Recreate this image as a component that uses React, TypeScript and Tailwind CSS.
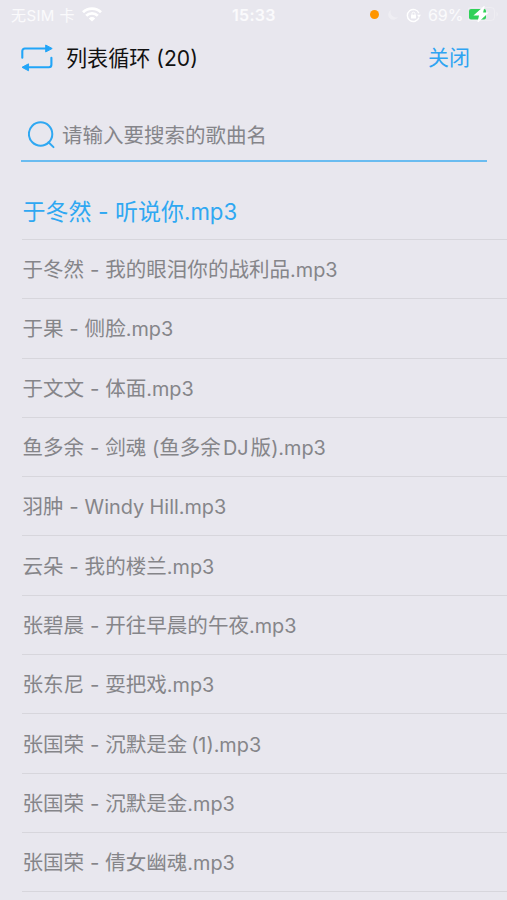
import { clsx } from 'clsx'

const songs = [
  '于冬然 - 听说你.mp3',
  '于冬然 - 我的眼泪你的战利品.mp3',
  '于果 - 侧脸.mp3',
  '于文文 - 体面.mp3',
  '鱼多余 - 剑魂 (鱼多余DJ版).mp3',
  '羽肿 - Windy Hill.mp3',
  '云朵 - 我的楼兰.mp3',
  '张碧晨 - 开往早晨的午夜.mp3',
  '张东尼 - 耍把戏.mp3',
  '张国荣 - 沉默是金 (1).mp3',
  '张国荣 - 沉默是金.mp3',
  '张国荣 - 倩女幽魂.mp3',
]

function StatusBar() {
  return (
    <div className="flex h-[30px] items-center text-[16px] text-white/80">
      <span className="ml-[11px] w-[71px] whitespace-nowrap pt-[3px] text-[15px] tracking-[0.4px]">无SIM 卡</span>
      <svg className="mb-0.5 h-[15px] w-5" viewBox="0 0 20 15" fill="none" stroke="white" strokeWidth="2.8">
        <path d="M1 5.2a13 13 0 0 1 18 0" />
        <path d="M4.2 8.8a8.3 8.3 0 0 1 11.6 0" />
        <path d="M10 14.6 6.8 11.4a4.6 4.6 0 0 1 6.4 0z" fill="white" stroke="none" />
      </svg>
      <span className="ml-[130px] w-[138px] font-semibold tracking-[0.3px]">15:33</span>
      <span className="mb-0.5 h-[9px] w-[9px] rounded-full bg-[#ff9500]" />
      <svg className="ml-2 h-3 w-3" viewBox="0 0 12 12" fill="white" opacity="0.3">
        <path d="M4 1a5.2 5.2 0 1 0 7 7A5.4 5.4 0 0 1 4 1z" />
      </svg>
      <svg className="ml-[7px] h-[15px] w-[15px]" viewBox="0 0 15 15" fill="none" stroke="white" strokeWidth="1.4">
        <path d="M12.9 5.2A6 6 0 1 0 13 9.5" />
        <path d="M11 6.8h4l-2 2.8z" fill="white" stroke="none" />
        <rect x="5" y="6.8" width="5" height="3.8" rx=".5" fill="white" stroke="none" />
        <path d="M6 7V5.7a1.5 1.5 0 0 1 3 0V7" strokeWidth="1" />
      </svg>
      <span className="ml-[7px] w-[40px] whitespace-nowrap text-[16px] tracking-[-0.1px]">69%</span>
      <svg className="mb-0.5 h-4 w-8 shrink-0" viewBox="0 0 32 16">
        <rect x="-.5" y="1.5" width="27" height="13" rx="3.5" fill="none" stroke="white" strokeOpacity=".25" />
        <path d="M28.5 6v4.5c1.7-.6 1.7-4 0-4.5z" fill="white" fillOpacity=".3" />
        <rect x="1" y="3" width="17" height="10.5" rx="2" fill="#30d158" />
        <path d="M15.5 1.5 7.5 8.8h4.6L10.5 15l8.2-7.6h-4.6z" fill="white" stroke="white" strokeWidth="1.6" />
      </svg>
    </div>
  )
}

function LoopIcon() {
  return (
    <svg className="h-7 w-8" viewBox="0 0 32 28" fill="none" stroke="#21a5f8" strokeWidth="2.1" strokeLinecap="round">
      <path d="M1.3 13.7V7a2.5 2.5 0 0 1 2.5-2.5h22" />
      <path d="M25 1.2 31.2 4.5 25 7.8z" fill="#21a5f8" stroke="#21a5f8" strokeWidth="1" strokeLinejoin="round" />
      <path d="M30.4 13.8v7a2.5 2.5 0 0 1-2.5 2.5H7" />
      <path d="M7.2 20 1 23.3l6.2 3.3z" fill="#21a5f8" stroke="#21a5f8" strokeWidth="1" strokeLinejoin="round" />
    </svg>
  )
}

function SearchIcon() {
  return (
    <svg className="mb-[3px] h-7 w-7" viewBox="0 0 28 28" fill="none" stroke="#2fa8f2" strokeWidth="2" strokeLinecap="round">
      <circle cx="12.6" cy="13" r="11.7" />
      <path d="m20.5 21.3 5 4.8" />
    </svg>
  )
}

// Latin runs are set slightly smaller than the Chinese around them
function SongName({ name }: { name: string }) {
  return (
    <span className="whitespace-pre">
      {name.split(/([A-Za-z0-9.()][A-Za-z0-9.() ]*)/).map((part, i) =>
        i % 2 ? (
          <span
            key={i}
            className={clsx('text-[0.965em]', part === 'DJ' && 'mx-[2px]', part.startsWith('(1') && '-ml-[2px]')}
          >
            {part}
          </span>
        ) : (
          part
        ),
      )}
    </span>
  )
}

export default function App() {
  return (
    <div className="h-[900px] w-[507px] overflow-hidden bg-[#e8e7ee] font-[Inter,'Noto_Sans_CJK_SC',sans-serif]">
      <StatusBar />
      <header className="flex h-[56px] items-center pl-[21px] pr-[37px]">
        <LoopIcon />
        <h1 className="ml-[13px] flex-1 whitespace-nowrap pt-0.5 text-[21.1px] text-[#111]">列表循环 (20)</h1>
        <button className="text-[21px] text-[#2fa4f2]">关闭</button>
      </header>
      <div className="ml-[21px] mr-5 mt-[22px] flex h-[54px] items-center border-b-2 border-[#6abcf0] pl-[7px] pt-1">
        <SearchIcon />
        <span className="ml-[6px] text-[20.5px] text-[#85858a]">请输入要搜索的歌曲名</span>
      </div>
      <ul className="mt-[18.6px] pl-[22px]">
        {songs.map((song, i) => (
          <li
            key={song}
            className={clsx(
              'flex h-[59.32px] items-center border-b border-[#d7d6dc] pl-[0.5px]',
              i === 0 ? 'pt-[4px] text-[23px] text-[#2fa8f2]' : 'pt-[3px] text-[20.55px] text-[#858589]',
            )}
          >
            <SongName name={song} />
          </li>
        ))}
      </ul>
    </div>
  )
}
